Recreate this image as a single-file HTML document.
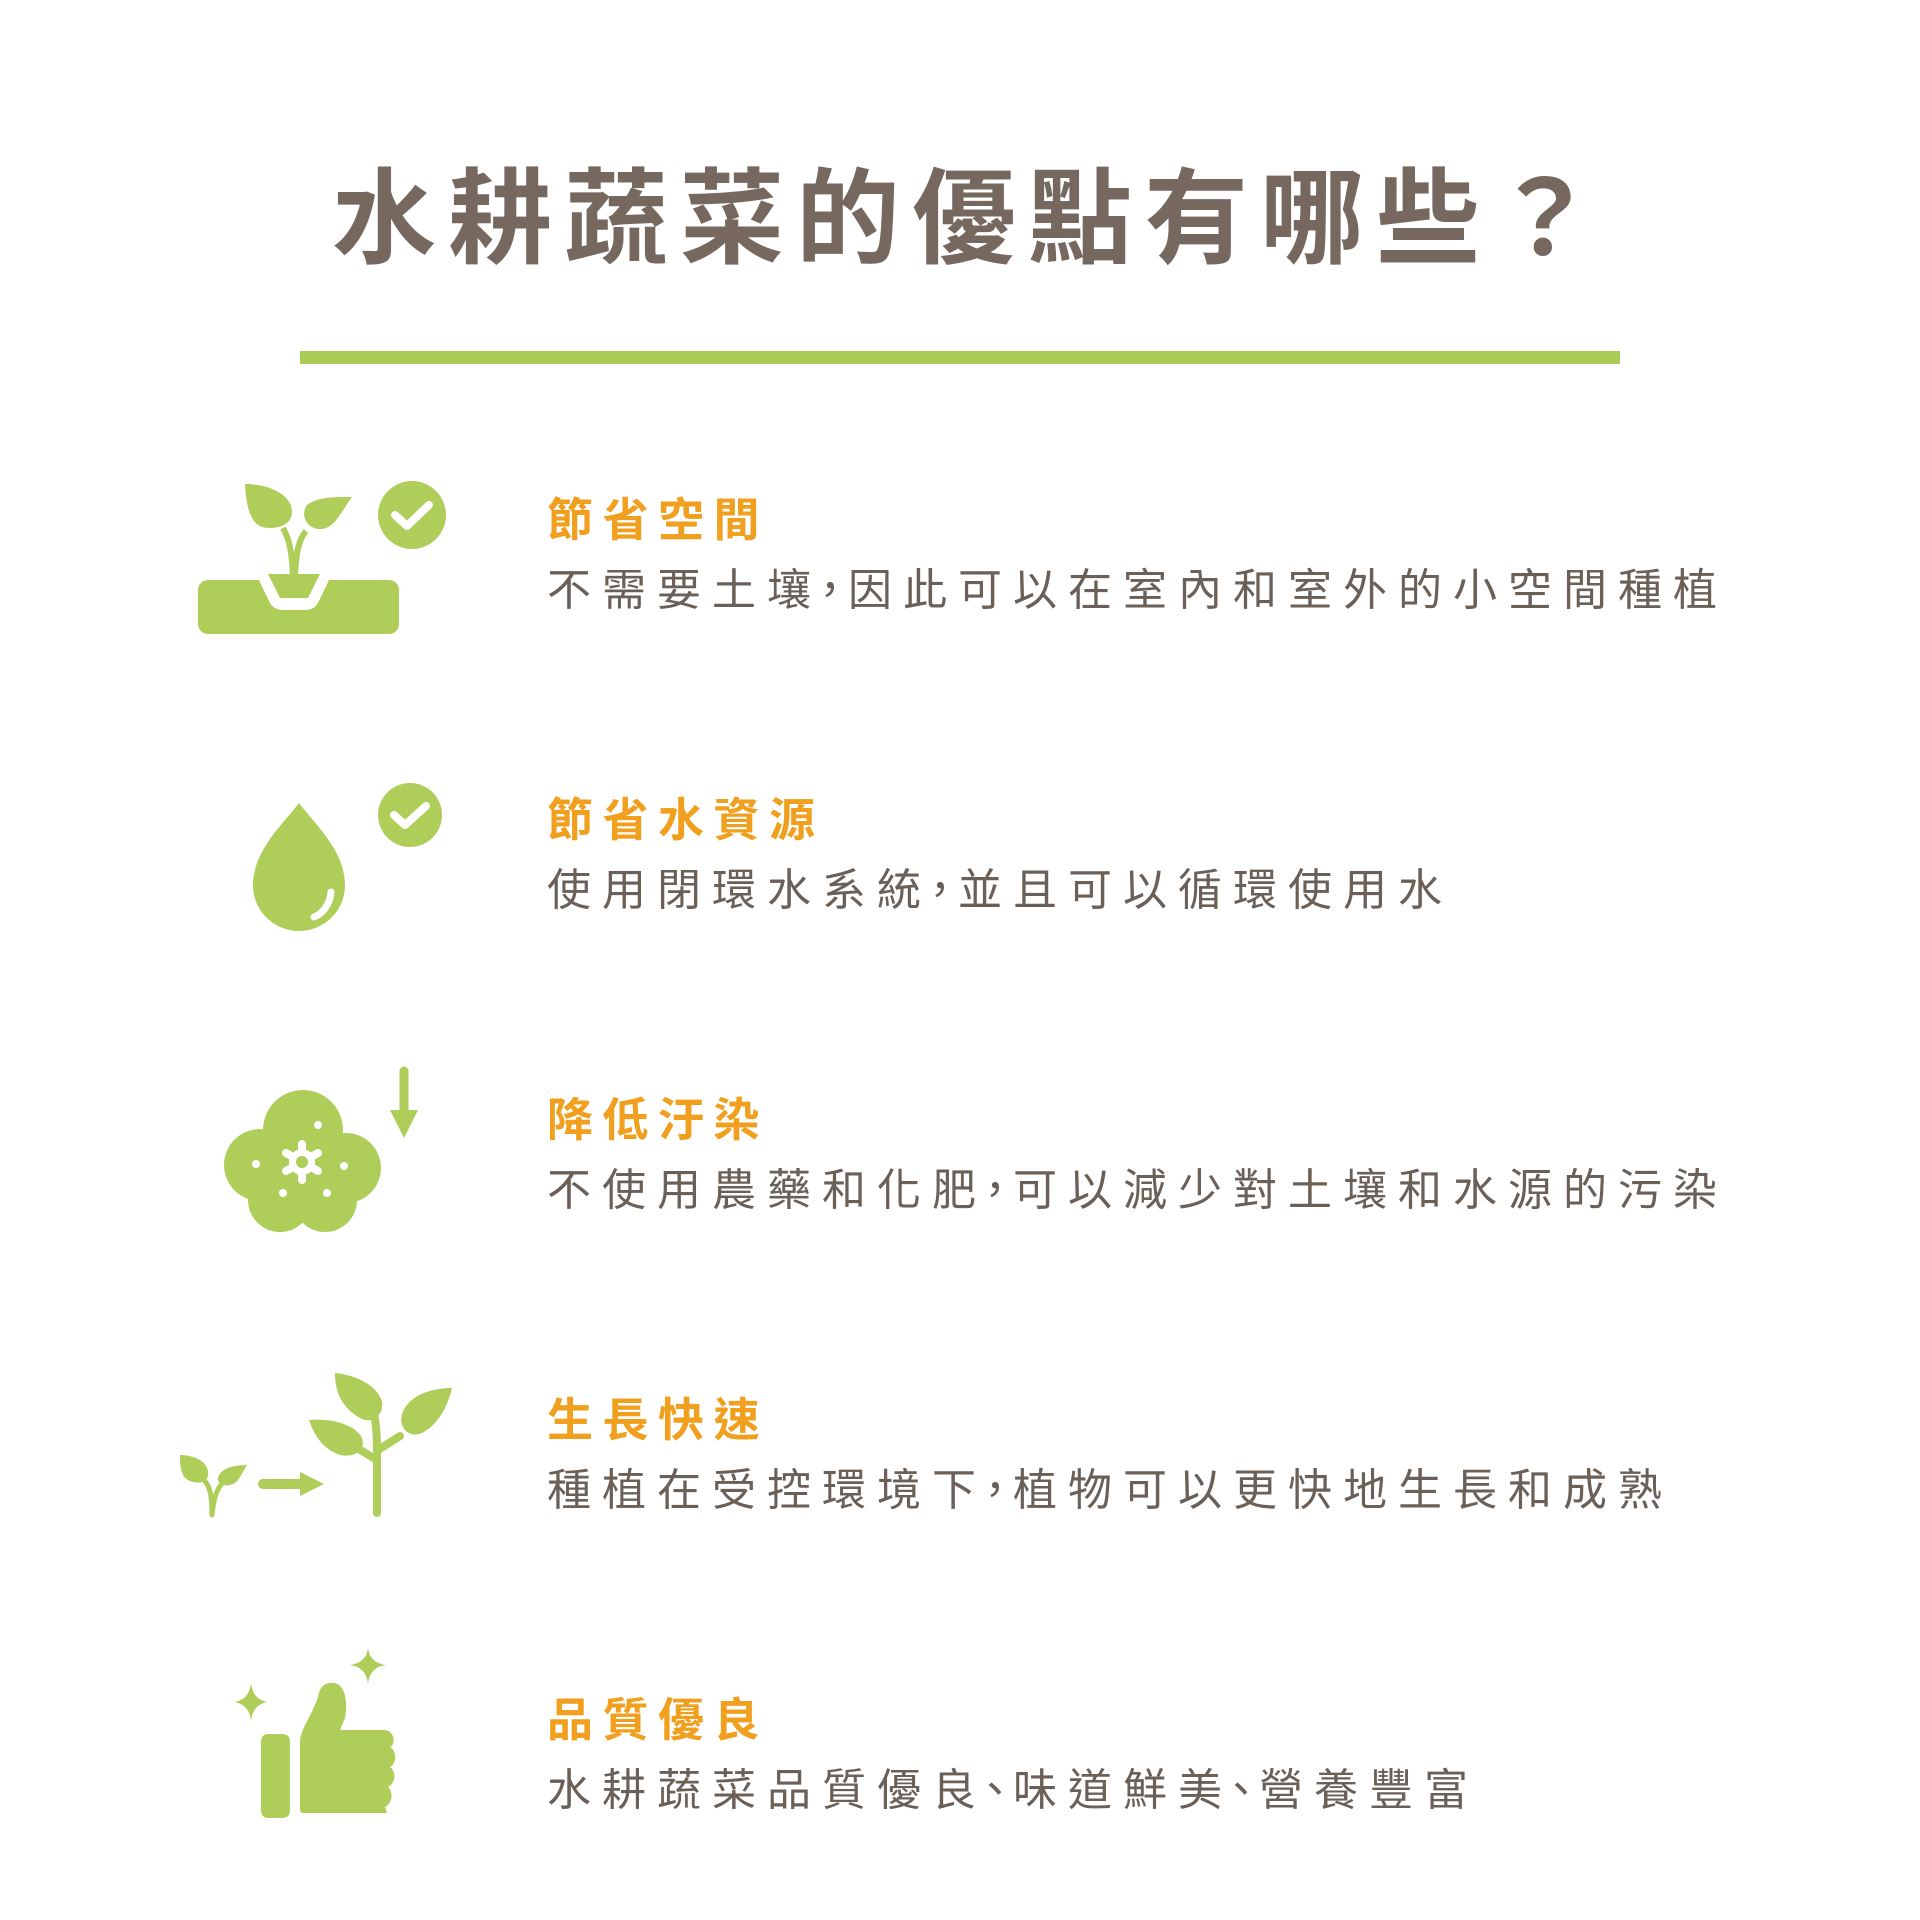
<!DOCTYPE html>
<html><head><meta charset="utf-8"><style>
html,body{margin:0;padding:0;background:#fff;width:1920px;height:1920px;overflow:hidden;position:relative;font-family:"Liberation Sans","Noto Sans CJK TC",sans-serif}
.t{position:absolute;white-space:nowrap;line-height:1}
h1{position:absolute;left:0;width:1920px;text-align:center;top:168px;margin:0;padding-left:20px;box-sizing:border-box;font-size:104px;font-weight:700;color:#76685e;letter-spacing:12px;line-height:1;font-family:"Liberation Sans","Noto Sans CJK TC",sans-serif}
.h{left:547px;font-size:46px;font-weight:700;color:#f0a01e;letter-spacing:9.5px}
.d{left:547px;font-size:44px;color:#6b6058;letter-spacing:11px}
.p{letter-spacing:-18px;position:relative;left:-14px}
svg{position:absolute;left:0;top:0}
</style></head><body>
<h1>水耕蔬菜的優點有哪些？</h1>
<div style="position:absolute;left:300px;top:351px;width:1320px;height:13px;background:#abcb58"></div>

<div class="t h" style="top:497px">節省空間</div>
<div class="t d" style="top:569px">不需要土壤<span class="p">，</span>因此可以在室內和室外的小空間種植</div>
<div class="t h" style="top:797px">節省水資源</div>
<div class="t d" style="top:869px">使用閉環水系統<span class="p">，</span>並且可以循環使用水</div>
<div class="t h" style="top:1097px">降低汙染</div>
<div class="t d" style="top:1169px">不使用農藥和化肥<span class="p">，</span>可以減少對土壤和水源的污染</div>
<div class="t h" style="top:1397px">生長快速</div>
<div class="t d" style="top:1469px">種植在受控環境下<span class="p">，</span>植物可以更快地生長和成熟</div>
<div class="t h" style="top:1697px">品質優良</div>
<div class="t d" style="top:1769px">水耕蔬菜品質優良<span class="p">、</span>味道鮮美<span class="p">、</span>營養豐富</div>

<svg width="1920" height="1920" viewBox="0 0 1920 1920" fill="#afcd59">
<rect x="198" y="580" width="201" height="54" rx="10"/>
<path d="M258 578 L330 578 L318 603 Q314 610 305 610 L283 610 Q274 610 270 603 Z" fill="#fff"/>
<path d="M268 574 L320 574 L308 598 L280 598 Z"/>
<path d="M293 576 C292 555 290 540 283 528 M295 576 C296 555 298 540 306 531" stroke="#afcd59" stroke-width="6" fill="none"/>
<path d="M245 484 C270 484 292 495 292 512 C292 526 275 530 262 527 C250 523 246 505 245 484Z"/>
<path d="M352 497 C340 497 318 496 307 505 C300 514 306 530 322 529 C335 528 342 510 352 497Z"/>
<circle cx="412" cy="515" r="34"/>
<path d="M395 515 L407 526 L429 505" stroke="#fff" stroke-width="8" fill="none" stroke-linecap="round" stroke-linejoin="round"/>
<path d="M299 803 C285 822 253 850 253 885 C253 912 275 931 299 931 C323 931 345 912 345 885 C345 850 313 822 299 803Z"/>
<path d="M331 892 C330 905 322 914 314 917" stroke="#fff" stroke-width="7" fill="none" stroke-linecap="round"/>
<circle cx="410" cy="815" r="32"/>
<path d="M394 815 L405 825 L426 806" stroke="#fff" stroke-width="8" fill="none" stroke-linecap="round" stroke-linejoin="round"/>
<circle cx="303" cy="1130" r="40"/><circle cx="260" cy="1165" r="36"/><circle cx="346" cy="1168" r="35"/>
<circle cx="280" cy="1200" r="32"/><circle cx="325" cy="1200" r="32"/><circle cx="302" cy="1168" r="50"/>
<g fill="#fff">
<circle cx="302" cy="1162" r="13"/>
<g stroke="#fff" stroke-width="8" stroke-linecap="round"><path d="M302 1144V1180M286 1153L318 1171M286 1171L318 1153"/></g>
<circle cx="302" cy="1162" r="6" fill="#afcd59"/>
<circle cx="318" cy="1125" r="4"/><circle cx="256" cy="1164" r="4"/><circle cx="344" cy="1166" r="4"/><circle cx="283" cy="1193" r="4"/><circle cx="327" cy="1193" r="4"/>
</g>
<path d="M404 1071 V1115" stroke="#afcd59" stroke-width="9" stroke-linecap="round"/>
<path d="M390 1110 H418 L404 1138 Z"/>
<path d="M212 1515 C212 1495 210 1485 202 1478 M212 1515 C214 1495 218 1485 228 1478" stroke="#afcd59" stroke-width="5" fill="none" stroke-linecap="round"/>
<path d="M180 1455 C196 1455 210 1463 208 1476 C205 1486 188 1484 183 1475 C180 1468 180 1462 180 1455Z"/>
<path d="M247 1465 C235 1465 220 1468 218 1478 C217 1487 232 1488 238 1480 C242 1474 244 1470 247 1465Z"/>
<path d="M263 1484 H303" stroke="#afcd59" stroke-width="10" stroke-linecap="round"/>
<path d="M300 1472 L324 1484 L300 1496Z"/>
<path d="M377 1513 V1460 C377 1440 377 1425 373 1410 M377 1460 L352 1445 M378 1450 L400 1436" stroke="#afcd59" stroke-width="8" fill="none" stroke-linecap="round"/>
<path d="M335 1373 C355 1375 378 1385 382 1402 C384 1415 372 1425 360 1418 C342 1408 335 1392 335 1373Z"/>
<path d="M452 1388 C430 1388 408 1396 402 1414 C398 1428 410 1440 424 1432 C440 1422 448 1405 452 1388Z"/>
<path d="M309 1420 C330 1418 355 1424 362 1438 C366 1450 355 1458 340 1455 C325 1450 315 1438 309 1420Z"/>
<rect x="261" y="1734" width="29" height="84" rx="7"/>
<path d="M300 1742 C300 1730 312 1715 318 1697 C320 1684 328 1682 335 1683 C345 1686 348 1700 345 1718 L340 1730 L384 1730 C395 1730 396 1745 390 1747 C398 1752 396 1764 390 1767 C397 1772 395 1784 388 1787 C394 1792 392 1804 385 1807 L387 1813 L303 1813 C300 1813 300 1810 300 1808 Z"/>
<path d="M251 1683 Q253 1700 268 1702 Q253 1704 251 1721 Q249 1704 234 1702 Q249 1700 251 1683Z"/>
<path d="M368 1648 Q370 1663 386 1665 Q370 1667 368 1684 Q366 1667 350 1665 Q366 1663 368 1648Z"/>
</svg>
</body></html>
